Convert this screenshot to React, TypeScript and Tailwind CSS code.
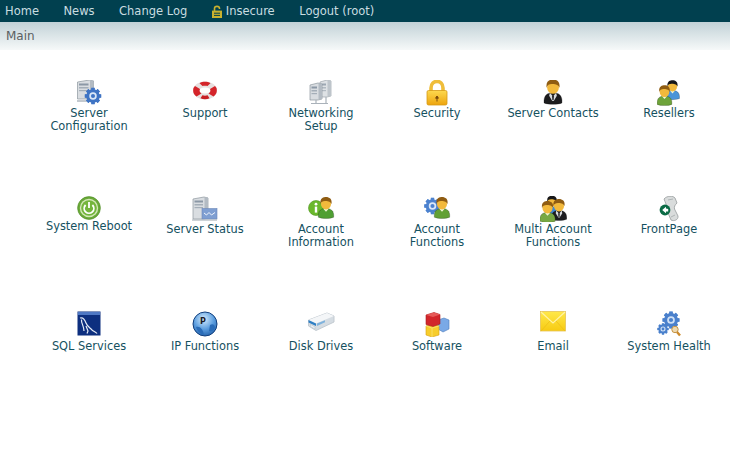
import type { ReactNode } from "react";

function Icon({ w = 28, h = 28, children }: { w?: number; h?: number; children: ReactNode }) {
  return (
    <svg width={w} height={h} viewBox={`0 0 ${w} ${h}`} aria-hidden="true">
      {children}
    </svg>
  );
}

function Gear({ x, y, r, fill = "#3f74c4", hole = "#dbe8f8" }: { x: number; y: number; r: number; fill?: string; hole?: string }) {
  const teeth = [0, 45, 90, 135, 180, 225, 270, 315];
  return (
    <g>
      {teeth.map((a) => (
        <rect
          key={a}
          x={x - r * 0.24}
          y={y - r * 1.2}
          width={r * 0.48}
          height={r * 2.4}
          fill={fill}
          transform={`rotate(${a} ${x} ${y})`}
        />
      ))}
      <circle cx={x} cy={y} r={r} fill={fill} />
      <circle cx={x} cy={y} r={r * 0.55} fill={hole} />
      <circle cx={x} cy={y} r={r * 0.3} fill={fill} />
    </g>
  );
}

function Tower({ x, y, w = 13, h = 18 }: { x: number; y: number; w?: number; h?: number }) {
  return (
    <g>
      <path d={`M${x} ${y + 2} L${x + w - 4} ${y} L${x + w} ${y + 1} V${y + h - 1} L${x + w - 4} ${y + h} H${x} Z`} fill="#d9dde1" stroke="#8d969e" strokeWidth="0.7" />
      <rect x={x + 1.5} y={y + 3.5} width={w - 6.5} height={2} fill="#8b98a6" />
      <rect x={x + 1.5} y={y + 7} width={w - 6.5} height={1.5} fill="#a4aeb8" />
      <rect x={x + 1.5} y={y + 10} width={w - 6.5} height={1.2} fill="#a4aeb8" />
      <path d={`M${x + w - 3.5} ${y + 0.5} H${x + w} V${y + h - 1} H${x + w - 3.5} Z`} fill="#b3bbc3" />
    </g>
  );
}

function Person({
  x,
  y,
  s = 1,
  body,
  hair = "#8f5c12",
  tie,
}: {
  x: number;
  y: number;
  s?: number;
  body: string;
  hair?: string;
  tie?: boolean;
}) {
  return (
    <g transform={`translate(${x} ${y}) scale(${s})`}>
      <path d="M-7 17.5 C-7.5 11 -4 9.5 0 9.5 C4 9.5 7.5 11 7 17.5 C4 19 -4 19 -7 17.5 Z" fill={body} stroke="#00000055" strokeWidth="0.6" />
      {tie && <path d="M-2.4 9.5 L0 12.5 L2.4 9.5 L3 12 L0.6 16 H-0.6 L-3 12 Z" fill="#d8dcdf" />}
      {tie && <path d="M-0.8 12 H0.8 L0.5 15.5 H-0.5 Z" fill="#2a2a2d" />}
      {!tie && <path d="M-2.4 9.7 L0 12.4 L2.4 9.7 Z" fill="#f2f6d8" />}
      <ellipse cx="0" cy="5.4" rx="4.6" ry="5" fill="#f2b93c" />
      <path d="M-5 5.6 C-5.8 0 -2 -0.8 0 -0.8 C3 -0.8 5.8 1 5 5.6 C4 3 1 2.8 -1 2.8 C-3 2.8 -4.4 3.5 -5 5.6 Z" fill={hair} />
    </g>
  );
}

const ServerConfigIcon = () => (
  <Icon w={27} h={26}>
    <Tower x={1.5} y={0} w={16} h={19} />
    <path d="M1 21 H12" stroke="#aab2ba" strokeWidth="1.4" />
    <Gear x={17} y={16} r={6.8} />
  </Icon>
);

const SupportIcon = () => (
  <Icon w={26} h={22}>
    <ellipse cx="13" cy="10.5" rx="9" ry="6" fill="none" stroke="#e6e0df" strokeWidth="6" />
    <path d="M1.5 8 C0.8 11 1 14 4.5 16.5 L9.5 13.5 C7.6 12.5 7.2 10.5 8 9 L3 6 Z" fill="#d4242a" />
    <path d="M24.5 8 C25.2 11 25 14 21.5 16.5 L16.5 13.5 C18.4 12.5 18.8 10.5 18 9 L23 6 Z" fill="#d4242a" />
    <path d="M7.5 3.2 C10.5 1.4 15.5 1.4 18.5 3.2 L15.5 6 C14 5.5 12 5.5 10.5 6 Z" fill="#d4242a" />
    <path d="M8.5 18.2 C11 19.6 15 19.6 17.5 18.2 L15.6 15.3 C14 15.9 12 15.9 10.4 15.3 Z" fill="#c81f25" />
  </Icon>
);

const NetworkingIcon = () => (
  <Icon w={26} h={26}>
    <g opacity="0.85">
      <Tower x={12} y={0} w={11} h={17} />
    </g>
    <Tower x={2} y={3} w={12} h={17} />
    <path d="M8 20 V23 M3 23.5 H20 M18 17 V23" stroke="#aab2ba" strokeWidth="1.2" />
  </Icon>
);

const SecurityIcon = () => (
  <Icon w={22} h={28}>
    <defs>
      <linearGradient id="lockBody" x1="0" x2="0" y1="0" y2="1">
        <stop offset="0" stopColor="#fdd94f" />
        <stop offset="1" stopColor="#eda40e" />
      </linearGradient>
    </defs>
    <path d="M5 13 V8 C5 -0.8 17 -0.8 17 8 V13" fill="none" stroke="#efbd3a" strokeWidth="3.6" />
    <rect x="1" y="10.5" width="20" height="14.5" rx="1.5" fill="url(#lockBody)" stroke="#d69a18" strokeWidth="0.8" />
    <path d="M11 16.5 V21.5 M9.6 18.2 L11 16 L12.4 18.2 Z" stroke="#7a4a0a" strokeWidth="1" fill="#7a4a0a" />
  </Icon>
);

const ServerContactIcon = () => (
  <Icon w={20} h={27}>
    <Person x={10} y={0.5} s={1.28} body="#1c1c1e" tie />
  </Icon>
);

const ResellersIcon = () => (
  <Icon w={24} h={26}>
    <Person x={15.5} y={1} s={1} body="#4b94d8" hair="#17171a" />
    <Person x={7.5} y={6} s={1.05} body="#6ea33a" />
  </Icon>
);

const RebootIcon = () => (
  <Icon w={24} h={24}>
    <circle cx="12" cy="12" r="11.4" fill="#6aa938" stroke="#4b8a24" strokeWidth="0.6" />
    <circle cx="12" cy="12" r="9.2" fill="#d3e8b8" />
    <circle cx="12" cy="12" r="7.8" fill="#74b53c" />
    <path d="M8.6 9 A4.8 4.8 0 1 0 15.4 9" fill="none" stroke="#fff" strokeWidth="1.8" />
    <path d="M12 6 V12" stroke="#fff" strokeWidth="1.8" />
  </Icon>
);

const ServerStatusIcon = () => (
  <Icon w={26} h={26}>
    <Tower x={1} y={1} w={15} h={22} />
    <rect x="10" y="12.5" width="15" height="10.5" fill="#7f9fd2" stroke="#6d88b8" strokeWidth="0.6" />
    <path d="M12 17 L14.5 19 L17 16.5 L19.5 19 L23 16.5" stroke="#f2f6fd" strokeWidth="1" fill="none" />
    <path d="M0 24 H25" stroke="#aeb6bd" strokeWidth="1.2" />
  </Icon>
);

const AccountInfoIcon = () => (
  <Icon w={27} h={24}>
    <circle cx="8" cy="12" r="7.5" fill="#6ab82c" stroke="#4f9420" strokeWidth="0.6" />
    <circle cx="8" cy="8.2" r="1.4" fill="#fff" />
    <rect x="6.8" y="10.6" width="2.4" height="6" fill="#fff" />
    <Person x={18} y={2} s={1.1} body="#4f9f33" />
  </Icon>
);

const AccountFunctionsIcon = () => (
  <Icon w={27} h={24}>
    <Gear x={8.5} y={10} r={6.8} fill="#4c82cf" />
    <Person x={18} y={2} s={1.1} body="#62a035" />
  </Icon>
);

const MultiAccountIcon = () => (
  <Icon w={27} h={26}>
    <Person x={12} y={0.5} s={0.95} body="#3f87cf" hair="#17171a" />
    <Person x={19} y={4} s={1.1} body="#1d1d20" tie />
    <Person x={7.5} y={6} s={1.1} body="#78a843" />
  </Icon>
);

const FrontPageIcon = () => (
  <Icon w={22} h={26}>
    <path d="M6 3 C9 -0.5 15 -0.5 17 2 L19 7 C17 9 16 10.5 16.5 13 L20 20 C20.5 24 16 25.5 13 24 L10 17 L8 8 C7.5 6 6.5 5 6 3 Z" fill="#d9dcdc" stroke="#959b9c" strokeWidth="0.8" />
    <path d="M10 4 L15 3 M13 21 L17 19" stroke="#a5abac" strokeWidth="0.8" />
    <circle cx="7" cy="14" r="5.4" fill="#0b6b45" />
    <path d="M4.2 14 L8 10.8 V12.6 L10.2 13 V15.6 H8 V17.2 Z" fill="#fff" />
  </Icon>
);

const SqlIcon = () => (
  <Icon w={24} h={25}>
    <rect x="0.5" y="0.5" width="23" height="24" fill="#0d2f7f" />
    <rect x="1" y="1" width="22" height="3" fill="#4f78c4" />
    <path d="M3 7 C6 6 8 9 9 12 C10 15 13 17 15 19 C17 20.5 19 21 20 22.5 M4.5 8.5 C4 12 7 15 7 20 M9 15 L11 20 L10 22.5" fill="none" stroke="#e6ecf7" strokeWidth="1.2" />
  </Icon>
);

const IpIcon = () => (
  <Icon w={26} h={26}>
    <defs>
      <radialGradient id="globeFill" cx="0.45" cy="0.3" r="0.75">
        <stop offset="0" stopColor="#d6ecfc" />
        <stop offset="0.55" stopColor="#5d9fe0" />
        <stop offset="1" stopColor="#1f5ea8" />
      </radialGradient>
    </defs>
    <circle cx="13" cy="13" r="12" fill="url(#globeFill)" stroke="#123f7d" strokeWidth="1" />
    <path d="M4 16 C8 15 11 18 12 24 C8 23 5 20 4 16 Z M18 14 C21 12 23 14 23 17 C22 20 19 21 17 20 Z" fill="#2a6cb8" />
    <text x="8" y="12.5" fontSize="8" fontWeight="700" fontFamily="'DejaVu Sans', sans-serif" fill="#1b1b2a">P</text>
  </Icon>
);

const DiskIcon = () => (
  <Icon w={28} h={22}>
    <path d="M1.5 9 L20 2 L27 5 V11 L9 19.5 L1.5 15 Z" fill="#d5dce2" stroke="#c3cbd2" strokeWidth="1" strokeLinejoin="round" />
    <path d="M1.5 9 L9 12.5 L27 5 L20 2 Z" fill="#f4f6f8" strokeLinejoin="round" />
    <path d="M1.5 9 L9 12.5 V15 L1.5 11.5 Z" fill="#2f7fc4" />
    <path d="M10 12.5 L18 9.2 V11.2 L10 15 Z" fill="#7fb2dc" />
    <path d="M3.5 13.5 L8 16 V18 L3.5 15.5 Z" fill="#f0f4f8" stroke="#a9b3bc" strokeWidth="0.4" />
  </Icon>
);

const SoftwareIcon = () => (
  <Icon w={26} h={26}>
    <path d="M14 9 L20 7 L25 9 V18 L19 21 L14 18 Z" fill="#7aa9e6" stroke="#4d7cbc" strokeWidth="0.6" />
    <path d="M2 15 L9 13 L15 15 V24 L8 26 L2 24 Z" fill="#f7cd2c" stroke="#d79f13" strokeWidth="0.6" />
    <path d="M2 15 L8 17 L15 15 M8 17 V26" stroke="#fbe680" strokeWidth="0.7" fill="none" />
    <path d="M2 4 L10 1.5 L16 3.5 V13 L9 15.5 L2 13.5 Z" fill="#d2262b" stroke="#a81c20" strokeWidth="0.6" />
    <path d="M2 4 L9 6 L16 3.5 L10 1.5 Z" fill="#e65a58" />
  </Icon>
);

const EmailIcon = () => (
  <Icon w={26} h={21}>
    <defs>
      <linearGradient id="envelope" x1="0" x2="0" y1="0" y2="1">
        <stop offset="0" stopColor="#ffe84a" />
        <stop offset="1" stopColor="#f7cb12" />
      </linearGradient>
    </defs>
    <rect x="0.5" y="0.5" width="25" height="19.5" fill="url(#envelope)" stroke="#e5c458" strokeWidth="0.8" />
    <path d="M1 1 L13 12 L25 1" fill="none" stroke="#fff3a8" strokeWidth="1.2" />
    <path d="M1 20 L10 10 M25 20 L16 10" stroke="#eebf17" strokeWidth="0.8" />
  </Icon>
);

const HealthIcon = () => (
  <Icon w={25} h={26}>
    <Gear x={14} y={9} r={7} fill="#4a80cc" hole="#cfe0f5" />
    <Gear x={6} y={18} r={4.6} fill="#4a80cc" hole="#cfe0f5" />
    <circle cx="18" cy="18.5" r="3.2" fill="#eed9b0" stroke="#c59445" strokeWidth="1" />
    <path d="M20 21 L23 24.5" stroke="#cc8a2c" strokeWidth="2.4" />
  </Icon>
);

const LockOpenIcon = () => (
  <svg width="10" height="13" viewBox="0 0 10 13" aria-hidden="true">
    <path d="M2.5 6 V3.5 C2.5 0.6 7.5 0.6 7.5 3.5 V4" fill="none" stroke="#c9b12f" strokeWidth="1.6" />
    <rect x="0" y="5.6" width="10" height="7.4" fill="#c9b12f" />
    <path d="M2 8.2 H8 M2 10.4 H8" stroke="#01404f" strokeWidth="1" />
  </svg>
);

// iconH keeps the label where the picture has it; System Reboot sits higher
const rows = [
  {
    iconH: 27,
    items: [
      { label: ["Server", "Configuration"], icon: <ServerConfigIcon /> },
      { label: ["Support"], icon: <SupportIcon /> },
      { label: ["Networking", "Setup"], icon: <NetworkingIcon /> },
      { label: ["Security"], icon: <SecurityIcon /> },
      { label: ["Server Contacts"], icon: <ServerContactIcon /> },
      { label: ["Resellers"], icon: <ResellersIcon /> },
    ],
  },
  {
    iconH: 27,
    items: [
      { label: ["System Reboot"], icon: <RebootIcon />, iconH: 24 },
      { label: ["Server Status"], icon: <ServerStatusIcon /> },
      { label: ["Account", "Information"], icon: <AccountInfoIcon /> },
      { label: ["Account", "Functions"], icon: <AccountFunctionsIcon /> },
      { label: ["Multi Account", "Functions"], icon: <MultiAccountIcon /> },
      { label: ["FrontPage"], icon: <FrontPageIcon /> },
    ],
  },
  {
    iconH: 29,
    items: [
      { label: ["SQL Services"], icon: <SqlIcon /> },
      { label: ["IP Functions"], icon: <IpIcon /> },
      { label: ["Disk Drives"], icon: <DiskIcon /> },
      { label: ["Software"], icon: <SoftwareIcon /> },
      { label: ["Email"], icon: <EmailIcon /> },
      { label: ["System Health"], icon: <HealthIcon /> },
    ],
  },
];

export default function App() {
  return (
    <div className="h-[466px] w-[730px] overflow-hidden bg-white font-['DejaVu_Sans','Liberation_Sans',sans-serif] text-[11.4px]">
      <div className="flex h-[22px] items-center gap-[24.5px] bg-[#01404f] pl-[5px] text-[11.5px] leading-[14px] text-[#c9dde0]">
        <a>Home</a>
        <a>News</a>
        <a>Change Log</a>
        <a className="flex items-center gap-[4px]">
          <LockOpenIcon />
          Insecure
        </a>
        <a>Logout (root)</a>
      </div>
      <div className="flex h-[28px] items-center bg-gradient-to-b from-[#c2d2d7] to-[#f6f9f9] pl-[6px] text-[12px] text-[#5a5f61]">
        Main
      </div>
      <div className="pl-[31px] pt-[30px]">
        {rows.map((row, i) => (
          <div key={i} className="grid h-[115.5px] grid-cols-[repeat(6,116px)]">
            {row.items.map((item) => (
              <a key={item.label.join(" ")} className="flex flex-col items-center text-center leading-[13px] text-[#15515f]">
                <div
                  className="flex items-start justify-center"
                  style={{ height: ("iconH" in item ? item.iconH : row.iconH) as number }}
                >
                  {item.icon}
                </div>
                {item.label.map((line) => (
                  <span key={line}>{line}</span>
                ))}
              </a>
            ))}
          </div>
        ))}
      </div>
    </div>
  );
}
